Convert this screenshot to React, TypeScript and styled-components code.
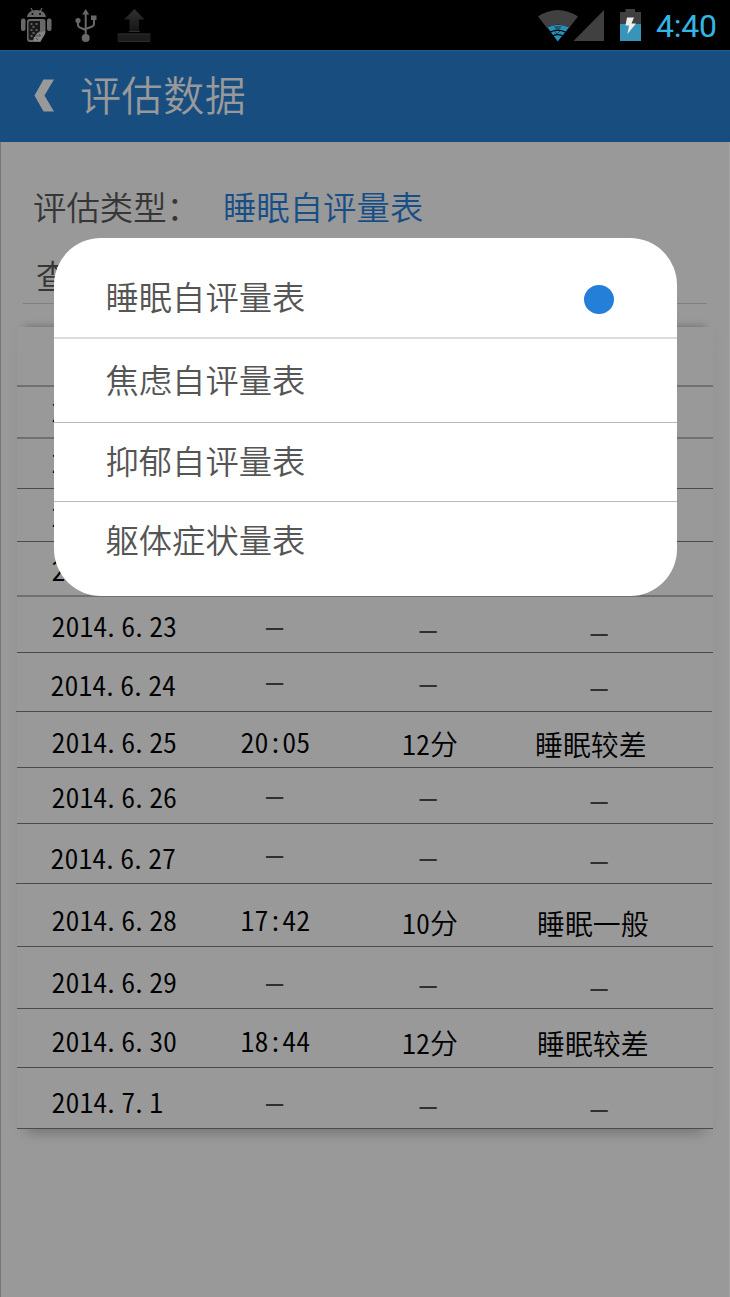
import React from 'react';
import styled, { createGlobalStyle } from 'styled-components';

const GlobalStyle = createGlobalStyle`
  * { box-sizing: border-box; }
  body { margin: 0; background: #999; }
`;

const Screen = styled.div`
  position: relative;
  width: 730px;
  height: 1297px;
  overflow: hidden;
  display: flex;
  flex-direction: column;
  background: #999;
  font-family: 'Noto Sans CJK SC', sans-serif;
  font-weight: 350;
`;

const StatusBar = styled.div`
  height: 50px;
  flex: none;
  display: flex;
  justify-content: space-between;
  background: #000;
`;

const StatusIcons = styled.svg`
  display: block;
`;

const StatusRight = styled.div`
  display: flex;
`;

const Clock = styled.span`
  width: 77px;
  padding-left: 3px;
  font: 400 32px/52px Roboto, sans-serif;
  letter-spacing: -0.2px;
  color: #33b5e5;
  white-space: nowrap;
`;

const Header = styled.header`
  height: 92px;
  flex: none;
  display: flex;
  align-items: center;
  padding: 0 0 3px 34px;
  background: #184d80;
  border-top: 1px solid #1e5a94;
`;

const Title = styled.h1`
  margin: 0 0 4px 26px;
  font-size: 41px;
  line-height: 60px;
  letter-spacing: 0.6px;
  font-weight: 350;
  color: #999;
`;

const Content = styled.main`
  flex: 1;
  display: flex;
  flex-direction: column;
  border-left: 1px solid #777;
  border-right: 1px solid #a4a4a4;
`;

const Field = styled.div<{ $top: number; $left: number }>`
  display: flex;
  padding: ${(p) => p.$top}px 0 0 ${(p) => p.$left}px;
  font-size: 33.4px;
  line-height: 48px;
  color: #363636;
`;

const FieldValue = styled.span`
  margin-left: 23px;
  color: #174e85;
`;

const Divider = styled.div`
  height: 1px;
  margin: 4px 22px 23px;
  background: #808080;
`;

const Card = styled.section`
  width: 696px;
  margin-left: 16px;
  box-shadow: 0 -8px 7px -8px rgba(0, 0, 0, 0.3), 0 14px 12px -10px rgba(0, 0, 0, 0.22),
    0 0 14px rgba(0, 0, 0, 0.03);
  background: #999;
`;

const Row = styled.div<{ $height: number; $heavy?: boolean; $shift?: boolean }>`
  height: ${(p) => p.$height}px;
  display: grid;
  grid-template-columns: 189px 136px 171px 200px;
  align-items: start;
  margin-left: ${(p) => (p.$shift ? -1.5 : 0)}px;
  margin-right: ${(p) => (p.$shift ? 1.5 : 0)}px;
  padding-left: ${(p) => (p.$shift ? 1.5 : 0)}px;
  border-bottom: ${(p) => (p.$heavy ? '2px solid #707070' : '1px solid #4b4b4b')};
`;

const Cell = styled.span<{ $top: number; $left: number }>`
  padding: ${(p) => p.$top}px 0 0 ${(p) => p.$left}px;
  font-size: 27.9px;
  line-height: 28px;
  font-feature-settings: 'hwid';
  white-space: nowrap;
  color: #000;
`;

const Point = styled.span`
  display: inline-block;
  width: 13.95px;
  font-feature-settings: normal;
`;

const Dash = styled(Cell)`
  font-family: 'Liberation Sans', sans-serif;
  font-size: 31px;
  font-feature-settings: normal;
  color: #303030;
`;

const Dialog = styled.div`
  position: absolute;
  left: 54px;
  top: 237.6px;
  width: 623.4px;
  height: 358.4px;
  border-radius: 47px;
  overflow: hidden;
  background: #fff;
  display: flex;
  flex-direction: column;
`;

const Option = styled.div<{ $height: number; $top: number; $line?: string }>`
  height: ${(p) => p.$height}px;
  flex: none;
  display: flex;
  justify-content: space-between;
  padding: ${(p) => p.$top}px 63.4px 0 51.5px;
  font-size: 33.3px;
  line-height: 48px;
  color: #555;
  border-bottom: ${(p) => p.$line ?? 'none'};
`;

const Radio = styled.span`
  width: 30px;
  height: 29px;
  margin-top: 13px;
  border-radius: 50%;
  background: #247fd9;
`;

type RowData = {
  h: number;
  heavy?: boolean;
  shift?: boolean;
  y: number;
  date?: string;
  x?: number;
  cells?: [string, string, string];
  ys?: [number, number, number];
  qx?: number;
};

// y and ys are the vertical centres of the text inside the row
const rows: RowData[] = [
  { h: 60, heavy: true, y: 30 },
  { h: 52, heavy: true, y: 25, date: '2' },
  { h: 50, y: 24, date: '2' },
  { h: 53, y: 28, date: '2' },
  { h: 55, heavy: true, y: 29, date: '2' },
  { h: 56, y: 30, date: '2014.6.23', cells: ['–', '–', '–'], ys: [31.5, 34.5, 37.5] },
  { h: 59, shift: true, y: 33, x: -1, date: '2014.6.24', cells: ['–', '–', '–'], ys: [30.5, 32.5, 36.5] },
  { h: 56, y: 31, date: '2014.6.25', cells: ['20:05', '12分', '睡眠较差'], ys: [31, 33, 33], qx: 22 },
  { h: 56, y: 30, date: '2014.6.26', cells: ['–', '–', '–'], ys: [29.5, 31.5, 34.5] },
  { h: 60, shift: true, y: 35, x: -1, date: '2014.6.27', cells: ['–', '–', '–'], ys: [32.5, 35.5, 38.5] },
  { h: 63, y: 37, date: '2014.6.28', cells: ['17:42', '10分', '睡眠一般'], ys: [37, 40, 40], qx: 24 },
  { h: 62, y: 36, date: '2014.6.29', cells: ['–', '–', '–'], ys: [37.5, 39.5, 42.5] },
  { h: 59, y: 33, date: '2014.6.30', cells: ['18:44', '12分', '睡眠较差'], ys: [33, 35, 35], qx: 24 },
  { h: 61, y: 35, date: '2014.7.1', cells: ['–', '–', '–'], ys: [36.5, 39.5, 42.5] },
];

const dashLeft = [60, 77.5, 77.5];

const options = [
  { label: '睡眠自评量表', h: 101.4, top: 34, line: '2px solid #ddd', selected: true },
  { label: '焦虑自评量表', h: 84, top: 16, line: '1px solid #b9b9b9' },
  { label: '抑郁自评量表', h: 79, top: 13, line: '1px solid #b9b9b9' },
  { label: '躯体症状量表', h: 94, top: 13 },
];

function DateText({ value }: { value: string }) {
  return (
    <>
      {value.split('.').map((part, i) => (
        <React.Fragment key={i}>
          {i > 0 && <Point>.</Point>}
          {part}
        </React.Fragment>
      ))}
    </>
  );
}

function NotificationIcons() {
  return (
    <StatusIcons width="160" height="50" viewBox="0 0 160 50">
      <defs>
        <linearGradient id="tray" x1="0" y1="0" x2="0" y2="1">
          <stop offset="0" stopColor="#303030" />
          <stop offset="1" stopColor="#161616" />
        </linearGradient>
      </defs>
      <g fill="#686868">
        <path d="M27 17c.5-4 4-7 9.500-7s9 3 9.500 7z" />
        <path d="m31 8 2 4m9-4-2 4" stroke="#686868" strokeWidth="1.200" />
        <rect x="21" y="18.500" width="4.500" height="12.500" rx="2" />
        <rect x="47" y="18.500" width="4.500" height="12.500" rx="2" />
        <path d="M29.500 19h13.500q2.500 0 2.500 2.500v11l-5 9.500H30q-3 0-3-3V21.500q0-2.500 2.500-2.500z" />
      </g>
      <path d="M30 21h10v10l-4 3-2 6h-4q-1.500 0-1.500-2V22.500q0-1.500 1.500-1.500z" fill="#181818" />
      <path
        d="M30.500 24h2m3 0h2m-5 3h2m-4 3h2m3 0h2m-5 3h2m-4 3h2"
        stroke="#777"
        strokeWidth="1.500"
      />
      <path d="m33 41 1-4 3-1 1-3 3-1 4-1v3l-5 7.500z" fill="#858585" />
      <path d="m36 38 2 2m1-6 2 2m-4 0 3 0" stroke="#444" />
      <path d="M32.500 13v2M40 13v2" stroke="#151515" strokeWidth="1.800" />
      <g fill="none" stroke="#686868" strokeWidth="2">
        <path d="M85.700 36V13M78 22v3q0 2 3 3l4.700 2M94 19v5q0 2-3 3l-5.300 2" />
      </g>
      <g fill="#686868">
        <path d="m85.700 9 3.500 5.500h-7z" />
        <circle cx="78" cy="20.500" r="2.600" />
        <path d="M91 15.500h5.500V20H91z" />
        <circle cx="85.700" cy="38" r="4" />
      </g>
      <path d="m134.500 9 10 10.500H139V31h-9.500V19.500h-5.500z" fill="url(#tray)" />
      <path d="M129 31.500h11" stroke="#303030" />
      <rect x="117.500" y="33.500" width="33" height="8.500" rx="1" fill="#1c1c1c" />
      <path d="M118 34h32M119 41.500h31" stroke="#2c2c2c" />
    </StatusIcons>
  );
}

function SystemIcons() {
  return (
    <StatusIcons width="120" height="50" viewBox="533 0 120 50">
      <path d="M538 16.500Q557.500 3.500 578 16.500L569 28Q557.500 21 547 28z" fill="#404040" />
      <path d="M547.500 27.500Q557.500 22 569 27.500L557.700 41.500z" fill="#2a8fb8" />
      <path d="m554 26 7.500 0-2 4.500h-3.500z" fill="#205c75" />
      <path d="M550 32q7.700-3.500 15.500 0M553 35.800q4.700-2.500 9.500 0" fill="none" stroke="#000" strokeWidth="1.200" />
      <path d="m554.500 31 2.500 3 3-3" fill="none" stroke="#17475b" strokeWidth="1" />
      <path d="M604 10v31h-30.500z" fill="#404040" />
      <path d="M620 12h5.500V9H635v3h6v12h-21z" fill="#404040" />
      <path d="M620 24h21v17h-21z" fill="#3894b8" />
      <path d="M627 17.500h7l-2.500 6h4.500L627.500 34l1.500-8.500h-3.500z" fill="#eee" />
    </StatusIcons>
  );
}

export default function App() {
  return (
    <Screen>
      <GlobalStyle />
      <StatusBar>
        <NotificationIcons />
        <StatusRight>
          <SystemIcons />
          <Clock>4:40</Clock>
        </StatusRight>
      </StatusBar>
      <Header>
        <svg width="20" height="33" viewBox="0 0 20 33">
          <path d="M9.500 0.500H20L10.500 16.500 20 32.500H9.500L0.500 16.500z" fill="#999" />
        </svg>
        <Title>评估数据</Title>
      </Header>
      <Content>
        <Field $top={40} $left={32}>
          评估类型：
          <FieldValue>睡眠自评量表</FieldValue>
        </Field>
        <Field $top={21} $left={35}>
          查
        </Field>
        <Divider />
        <Card>
          {rows.map((row, index) => (
            <Row key={index} $height={row.h} $heavy={row.heavy} $shift={row.shift}>
              {row.date && (
                <Cell $top={row.y - 16} $left={34.5 + (row.x ?? 0)}>
                  <DateText value={row.date} />
                </Cell>
              )}
              {row.cells?.map((text, i) =>
                text === '–' ? (
                  <Dash key={i} $top={row.ys![i] - 16} $left={dashLeft[i]}>
                    {text}
                  </Dash>
                ) : (
                  <Cell key={i} $top={row.ys![i] - (i === 2 ? 15 : 16)} $left={[34.5, 60, row.qx ?? 0][i]}>
                    {text}
                  </Cell>
                ),
              )}
            </Row>
          ))}
        </Card>
      </Content>
      <Dialog role="dialog">
        {options.map((option) => (
          <Option key={option.label} $height={option.h} $top={option.top} $line={option.line}>
            {option.label}
            {option.selected && <Radio />}
          </Option>
        ))}
      </Dialog>
    </Screen>
  );
}
